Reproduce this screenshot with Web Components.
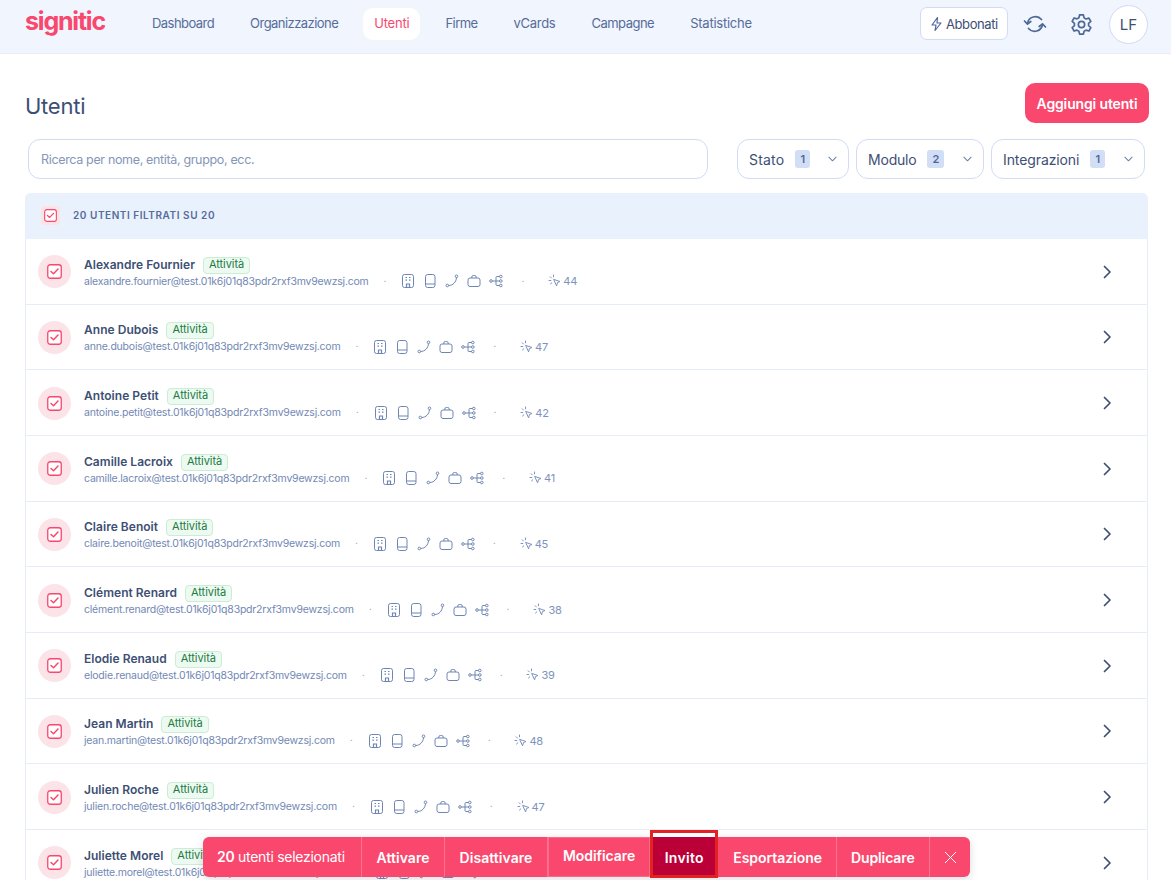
<!doctype html>
<html lang="it"><head><meta charset="utf-8"><title>Utenti</title>
<style>
html,body{margin:0;padding:0;height:880px;overflow:hidden;background:#fff;font-family:Inter,"Liberation Sans",sans-serif;color:#3d4f74}
</style></head><body>
<app-shell></app-shell>
<script>
class TopNav extends HTMLElement{constructor(){super();const s=this.attachShadow({mode:'open'});
const items=[['Dashboard',-.55],['Organizzazione',-.55],['Utenti',-.2],['Firme',-.55],['vCards',-.3],['Campagne',-.5],['Statistiche',-.25]];
s.innerHTML=`<style>
:host{display:flex;align-items:center;height:48px;background:#f0f5fe;border-bottom:1px solid #e6edf8;padding:0 23px 5px 25px}
.logo{width:81px;height:24px;margin:0 35px 6px 0;color:#f9476d;font:700 25px/24px Inter,sans-serif;letter-spacing:-1.2px}
nav{display:flex;gap:14px;flex:1;align-items:center}
a{font-size:13px;color:#566c9a;padding:0 11px;height:32px;line-height:30px;border-radius:10px}
a.on{background:#fff;color:#f9476d}
.sub{display:flex;align-items:center;gap:3px;height:33px;width:88px;box-sizing:border-box;padding:0 9px;border:1px solid #cfdcf3;border-radius:7px;background:#fff;font-size:13px;color:#3d4f74;letter-spacing:-.42px;margin-top:-1px}
.i{display:flex;color:#4e6896}
.right{display:flex;align-items:center}
.av{width:39px;height:39px;box-sizing:border-box;border-radius:50%;border:1px solid #cfdcf3;background:#fff;display:flex;align-items:center;justify-content:center;font-size:15px;color:#3d4f74;margin-left:14px}
</style>
<div class="logo">signitic</div>
<nav>${items.map(([t,l])=>`<a class="${t=='Utenti'?'on':''}" style="letter-spacing:${l}px">${t}</a>`).join('')}</nav>
<div class="right">
<div class="sub"><svg width="13" height="16" viewBox="2 0 12 16" style="flex:none"><path d="M9 1.500 3.500 9H7.500L6.500 14.500 12.500 7H8.500Z" fill="none" stroke="#4e6896" stroke-width="1.200" stroke-linejoin="round"/></svg>Abbonati</div>
<span class="i" style="margin-left:15px"><svg width="24" height="24" viewBox="0 0 24 24" fill="none" stroke="currentColor" stroke-width="1.700" stroke-linecap="round" stroke-linejoin="round"><path d="M4.500 11.500A8 8 0 0 1 18.500 7.500"/><path d="M1.500 9l3 3.200L7.800 9.500"/><path d="M19.500 12.500A8 8 0 0 1 5.500 16.500"/><path d="M22.500 15l-3-3.200-3.300 2.700"/></svg></span>
<span class="i" style="margin-left:21px"><svg width="27" height="27" viewBox="0 0 24 24" fill="none" stroke="currentColor" stroke-width="1.500" stroke-linejoin="round"><circle cx="12" cy="12" r="2.800"/><path d="M10.300 3.500h3.400l.6 2.600 1.700 1 2.600-.8 1.700 3-2 1.800v1.900l2 1.800-1.700 3-2.600-.8-1.700 1-.6 2.600h-3.400l-.6-2.600-1.700-1-2.600.8-1.700-3 2-1.800V11l-2-1.800 1.700-3 2.600.8 1.700-1z"/></svg></span>
<div class="av">LF</div></div>`;}}
customElements.define('top-nav',TopNav);

class FilterChip extends HTMLElement{constructor(){super();const s=this.attachShadow({mode:'open'});
s.innerHTML=`<style>
:host{display:flex;align-items:center;height:40px;box-sizing:border-box;border:1px solid #cfdcf3;border-radius:12px;background:#fff;padding:0 11px;font-size:14px;color:#3d4f74;letter-spacing:-.2px}
b{font-weight:600;font-size:11px;background:#d2def5;color:#4e6896;width:var(--bw,15px);height:18px;border-radius:3px;display:flex;align-items:center;justify-content:center;margin-left:11px;letter-spacing:0}
svg{margin-left:auto}
</style><slot></slot><b>${this.getAttribute('n')}</b><svg width="9" height="6" viewBox="0 0 10 6" fill="none" stroke="#6e83ab" stroke-width="1.200" stroke-linecap="round" stroke-linejoin="round"><path d="M1 1l4 4 4-4"/></svg>`;}}
customElements.define('filter-chip',FilterChip);

class CheckBox extends HTMLElement{constructor(){super();const s=this.attachShadow({mode:'open'});
s.innerHTML=`<style>
:host{display:flex;align-items:center;justify-content:center;width:var(--o,33px);height:var(--o,33px);border-radius:var(--r,50%);background:#fbe3e8;flex:none}
svg{display:block;width:var(--s,15px);height:var(--s,15px)}
</style><svg viewBox="0 0 15 15" fill="#fff"><rect x=".75" y=".75" width="13.500" height="13.500" rx="2.500" stroke="#f9476d" stroke-width="1.300"/><path d="M4 7.500l2.500 2.200L11 5" fill="none" stroke="#f9476d" stroke-width="1.500" stroke-linecap="round" stroke-linejoin="round"/></svg>`;}}
customElements.define('check-box',CheckBox);

class UserRow extends HTMLElement{constructor(){super();const s=this.attachShadow({mode:'open'});
const n=this.getAttribute('name'),e=this.getAttribute('email'),c=this.getAttribute('count');
s.innerHTML=`<style>
:host{display:flex;align-items:center;height:65.67px;box-sizing:border-box;border-bottom:1px solid #e6edf8;padding:1px 33px 0 12px}
.m{margin-left:13px;flex:1;min-width:0}
.t{display:flex;align-items:center;height:19px}
.n{font-size:12px;font-weight:600;color:#3d4f74;letter-spacing:.03px}
.b{margin:2px 0 0 8px;font-size:11px;color:#217a42;background:#edfaf1;border:1px solid #c9eed4;border-radius:4px;height:17px;line-height:13px;box-sizing:border-box;padding:0 5px;letter-spacing:-.05px}
.s{display:flex;align-items:center;height:15px;color:#7288b4;font-size:10.500px;letter-spacing:-.21px;white-space:nowrap}
.d{margin:0 15px;color:#9aaccd}
.ics{display:flex;gap:8px;color:#6f86b3}
.ics svg,.cl svg{display:block}
.cl{display:flex;align-items:center;gap:1px;color:#7d92bc;font-size:11px}
.go{flex:none;display:flex}
</style><check-box></check-box>
<div class="m"><div class="t"><span class="n">${n}</span><span class="b">Attività</span></div>
<div class="s"><span>${e}</span><span class="d">·</span>
<span class="ics">
<svg width="14" height="14" viewBox="0 0 14 14" fill="none" stroke="currentColor" stroke-width="1"><rect x="1.500" y=".5" width="11" height="13" rx="2"/><path d="M4.500 3.500h1.500M8 3.500h1.500M4.500 6.200h1.500M8 6.200h1.500M5.500 13.500v-3.500h3v3.500" stroke-width="1.200"/></svg>
<svg width="14" height="14" viewBox="0 0 14 14" fill="none" stroke="currentColor" stroke-width="1"><rect x="2.500" y=".5" width="9.500" height="13" rx="2.200"/><path d="M2.500 10h9.500"/></svg>
<svg width="14" height="14" viewBox="0 0 14 14" fill="none" stroke="currentColor" stroke-width="1"><circle cx="2.300" cy="11.500" r="1.300"/><circle cx="11.500" cy="2.300" r="1.300"/><path d="M3.600 11.500C8 11.500 11.200 8 11.500 3.600"/></svg>
<svg width="14" height="14" viewBox="0 0 14 14" fill="none" stroke="currentColor" stroke-width="1"><rect x="1" y="4" width="12" height="8.500" rx="2"/><path d="M4.800 4V3a1.500 1.500 0 0 1 1.500-1.500h1.400A1.500 1.500 0 0 1 9.200 3v1"/></svg>
<svg width="14" height="14" viewBox="0 0 14 14" fill="none" stroke="currentColor" stroke-width="1"><circle cx="2" cy="7" r="1.300"/><circle cx="11.800" cy="2.500" r="1.300"/><circle cx="11.800" cy="7" r="1.300"/><circle cx="11.800" cy="11.500" r="1.300"/><path d="M3.300 7h7.200M10.500 2.500H8a1 1 0 0 0-1 1v7a1 1 0 0 0 1 1h2.500"/></svg>
</span><span class="d" style="margin:0 24px 0 18px">·</span>
<span class="cl"><svg width="14" height="14" viewBox="0 0 14 14" fill="none" stroke="currentColor" stroke-width="1" stroke-linecap="round" stroke-linejoin="round"><path d="M6 5.500l6 2-2.500 1-.8 3z"/><path d="M5.500 1v1.800M1 6.500h1.800M2.200 2.800l1.200 1.200M2.500 10l1.300-1.200"/></svg>${c}</span>
</div></div>
<span class="go"><svg width="12" height="14" viewBox="0 0 12 14" fill="none" stroke="#3d4f74" stroke-width="1.700" stroke-linecap="round" stroke-linejoin="round"><path d="M2.500 1.500L8 7l-5.500 5.500"/></svg></span>`;}}
customElements.define('user-row',UserRow);

class ActionBar extends HTMLElement{constructor(){super();const s=this.attachShadow({mode:'open'});
const a=[['Attivare',.05],['Disattivare',.05],['Modificare',-.05],['Invito',.3],['Esportazione',-.05],['Duplicare',-.1]];
s.innerHTML=`<style>
:host{position:absolute;left:203px;top:837px;height:40px;display:flex;background:#f9476d;border-radius:6px;color:#fff;font-size:14px;box-shadow:0 2px 8px rgba(60,70,100,.18)}
div{display:flex;align-items:center;padding:0 14.500px;border-left:1px solid #fb7391;font-weight:600;white-space:nowrap}
div.c{display:block;border:0;box-sizing:border-box;width:158px;flex:none;padding:0 0 0 14px;font-weight:400;font-size:14px;letter-spacing:-.27px;line-height:40px}
.c b{font-weight:600;letter-spacing:-.3px}
.mod{box-shadow:inset 0 0 0 1px #fb6c8b;padding:0 15px 3px 15px;box-sizing:border-box}
.inv{background:#bb0038;border:0;width:68px;padding:0;justify-content:center;position:relative;flex:none;box-sizing:border-box}
.inv::after{content:"";position:absolute;left:0;right:0;top:-7px;bottom:-1px;border:3px solid #e32222;box-sizing:border-box}
.inv::before{content:"";position:absolute;left:3px;right:3px;top:-4px;height:4px;background:#fff}
.exp{border:0;padding:0 14px 0 15px}
.dup{padding:0 14px}
.x{padding:0 13px 0 14px}
</style><div class="c"><b>20</b> utenti selezionati</div>${a.map(([t,l])=>`<div class="${t=='Invito'?'inv':t=='Modificare'?'mod':t=='Esportazione'?'exp':t=='Duplicare'?'dup':''}" style="letter-spacing:${l}px">${t}</div>`).join('')}<div class="x"><svg width="13" height="13" viewBox="0 0 13 13" fill="none" stroke="#fff" stroke-width="1"><path d="M1 1l11 11M12 1L1 12"/></svg></div>`;}}
customElements.define('action-bar',ActionBar);

class AppShell extends HTMLElement{constructor(){super();const s=this.attachShadow({mode:'open'});
const u=[['Alexandre Fournier','alexandre.fournier',44],['Anne Dubois','anne.dubois',47],['Antoine Petit','antoine.petit',42],['Camille Lacroix','camille.lacroix',41],['Claire Benoit','claire.benoit',45],['Clément Renard','clément.renard',38],['Elodie Renaud','elodie.renaud',39],['Jean Martin','jean.martin',48],['Julien Roche','julien.roche',47],['Juliette Morel','juliette.morel',46]];
s.innerHTML=`<style>
:host{display:block;position:relative;height:880px;overflow:hidden}
main{padding:0 22px 0 25px}
.h{display:flex;align-items:center;justify-content:space-between;height:84px}
h1{margin:0;font-size:22px;font-weight:400;color:#3d4f74;letter-spacing:-.25px;padding-top:20px}
.add{background:#f9476d;color:#fff;font-size:14px;font-weight:600;height:40px;width:124px;border-radius:10px;display:flex;align-items:center;justify-content:center;letter-spacing:-.15px;margin-top:14px}
.f{display:flex;align-items:center;height:40px;padding:0 4px 0 3px;margin-top:1px;gap:7px}
.q{flex:1;height:40px;box-sizing:border-box;border:1px solid #cfdcf3;border-radius:12px;padding:0 12px;display:flex;align-items:center;font-size:12.500px;color:#8496b9;letter-spacing:-.34px;margin-right:22px}
.l{margin:14px 1px 0 0;border:1px solid #e6edf8;border-top:0;border-radius:6px 6px 0 0}
.lh{display:flex;align-items:center;height:44px;padding:0 0 2px 16px;background:#e9f1fd;border-radius:6px 6px 0 0;margin:0 -1px;font-size:10px;font-weight:600;color:#566c9a;letter-spacing:.55px}
.lh span{margin-left:13px}
check-box.hc{--o:19px;--r:4px;--s:13px}
</style>
<top-nav></top-nav>
<main><div class="h"><h1>Utenti</h1><div class="add">Aggiungi utenti</div></div>
<div class="f"><div class="q">Ricerca per nome, entità, gruppo, ecc.</div>
<filter-chip n="1" style="width:112px;letter-spacing:.2px">Stato</filter-chip><filter-chip n="2" style="width:128px;--bw:17px">Modulo</filter-chip><filter-chip n="1" style="width:154px;letter-spacing:-.1px">Integrazioni</filter-chip></div>
<section class="l"><div class="lh"><check-box class="hc"></check-box><span>20 UTENTI FILTRATI SU 20</span></div>
${u.map(x=>`<user-row name="${x[0]}" email="${x[1]}@test.01k6j01q83pdr2rxf3mv9ewzsj.com" count="${x[2]}"></user-row>`).join('')}</section></main>
<action-bar></action-bar>`;}}
customElements.define('app-shell',AppShell);
</script></body></html>
